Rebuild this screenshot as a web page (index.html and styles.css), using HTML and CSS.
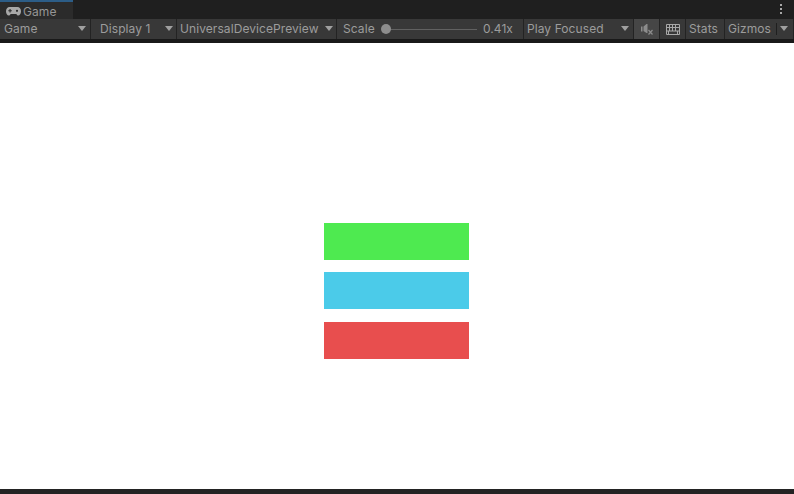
FILE: index.html
```html
<!DOCTYPE html>
<html lang="en">
<head>
  <meta charset="UTF-8" />
  <title>Game</title>
  <link rel="stylesheet" href="styles.css">
</head>
<body>
  <div class="window">
    <!-- Tab strip -->
    <div class="tab-row">
      <div class="tab">
        <svg class="tab-icon" width="15" height="9" viewBox="0 0 15 9">
          <path fill="#a8a8a8" fill-rule="evenodd" d="M3.500 0h8C13.500 0 15 1.800 15 4.300S13.700 8.500 12.300 8.500c-1 0-1.500-.7-2-1.500H4.700c-.5.800-1 1.500-2 1.500C1.300 8.500 0 6.800 0 4.300S1.500 0 3.500 0zM3.500 2v1.200H2.300v1.100h1.200v1.200h1.100V4.300h1.200V3.200H4.600V2zm7.500.7a1.100 1.100 0 1 0 0 2.200 1.100 1.100 0 0 0 0-2.200z"/>
        </svg>
        <span>Game</span>
      </div>
      <div class="tab-menu"><i></i><i></i><i></i></div>
    </div>

    <!-- Toolbar -->
    <div class="toolbar">
      <div class="tool drop w-game"><span>Game</span><b class="caret"></b></div>
      <div class="tool drop w-display"><span>Display 1</span><b class="caret"></b></div>
      <div class="tool drop w-device"><span>UniversalDevicePreview</span><b class="caret"></b></div>
      <div class="tool w-scale">
        <span>Scale</span>
        <div class="slider"><div class="thumb"></div></div>
        <span>0.41x</span>
      </div>
      <div class="tool drop w-play"><span>Play Focused</span><b class="caret"></b></div>
      <div class="tool icon-btn on">
        <svg width="12" height="11" viewBox="0 0 12 11">
          <path fill="#8c8c8c" d="M0 2.500h1.500v5H0zM2.500 2.500 5.500 0h1v9h-1L2.500 7z"/>
          <path stroke="#8c8c8c" stroke-width="1.200" fill="none" d="M7.500 6l4 4.500M11.500 6l-4 4.500"/>
        </svg>
      </div>
      <div class="tool icon-btn">
        <svg width="14" height="11" viewBox="0 0 14 11">
          <path stroke="#a8a8a8" fill="none" d="M.5.500h13v10H.5zM.5 3.500h13M.5 7h13M3.500.500v6.500M6.500.500v6.500M9.500.500v6.500M11.500 7v3.500M2.500 7v3.500"/>
        </svg>
      </div>
      <div class="tool w-stats"><span>Stats</span></div>
      <div class="tool w-gizmos"><span>Gizmos</span><em class="sep"></em><b class="caret"></b></div>
    </div>

    <div class="gap-strip"></div>

    <!-- Game view -->
    <div class="viewport">
      <div class="stack">
        <div class="bar green"></div>
        <div class="bar blue"></div>
        <div class="bar red"></div>
      </div>
    </div>

    <div class="bottom-strip"></div>
  </div>
</body>
</html>
```

FILE: styles.css
```css
* {
  box-sizing: border-box;
}

html, body {
  margin: 0;
  padding: 0;
  height: 100%;
  overflow: hidden;
  background: #1f1f1f;
}

.window {
  width: 794px;
  height: 494px;
  display: flex;
  flex-direction: column;
  font-family: Inter, "Liberation Sans", sans-serif;
  font-size: 12px;
  letter-spacing: 0.08px;
  color: #9c9c9c;
}

/* Tab strip */
.tab-row {
  height: 19px;
  display: flex;
  justify-content: space-between;
  background: #1f1f1f;
}

.tab {
  width: 73px;
  display: flex;
  align-items: center;
  gap: 2px;
  padding: 1px 0 0 6px;
  background: #2b2b2b;
  border-top: 2px solid #2c5d87;
  color: #969696;
}

.tab-icon {
  flex: none;
}

.tab-menu {
  width: 4px;
  margin: 4px 11px 0 0;
  display: flex;
  flex-direction: column;
  gap: 2px;
}

.tab-menu i {
  width: 2px;
  height: 2px;
  margin-left: 1px;
  background: #a8a8a8;
}

/* Toolbar */
.toolbar {
  height: 20px;
  display: flex;
  gap: 1px;
  background: #232323;
}

.tool {
  height: 20px;
  display: flex;
  align-items: center;
  padding: 0 4px 1px;
  background: #383838;
  white-space: nowrap;
}

.drop {
  justify-content: space-between;
}

.caret {
  flex: none;
  width: 0;
  height: 0;
  border-left: 4px solid transparent;
  border-right: 4px solid transparent;
  border-top: 5px solid #a0a0a0;
}

.w-game { width: 90px; padding-right: 4px; }
.w-display { width: 85px; padding-left: 9px; padding-right: 3px; }
.w-device { width: 159px; padding-left: 3px; padding-right: 3px; }
.w-scale { width: 186px; padding-left: 6px; padding-right: 10px; }
.w-play { width: 109px; padding-left: 3px; padding-right: 4px; }
.w-stats { width: 38px; padding-left: 3px; }
.w-gizmos { width: 68px; padding-left: 3px; }

.icon-btn {
  width: 25px;
  justify-content: center;
  padding: 0;
}

.icon-btn.on {
  background: #464646;
}

.slider {
  position: relative;
  flex: 1;
  height: 1px;
  margin: 1px 6px 0 11px;
  background: #616161;
}

.thumb {
  position: absolute;
  left: -5px;
  top: -5px;
  width: 10px;
  height: 10px;
  border-radius: 50%;
  background: #8d8d8d;
}

.sep {
  width: 1px;
  height: 12px;
  margin: 0 3px 0 5px;
  background: #1f1f1f;
}

.gap-strip {
  height: 4px;
  background: #191919;
}

/* Game view: the stack sits below the middle of the view */
.viewport {
  flex: 1;
  display: flex;
  justify-content: center;
  align-items: center;
  padding: 50px 2px 0 0;
  background: #fff;
}

.stack {
  width: 145px;
  display: flex;
  flex-direction: column;
  gap: 12px;
}

.bar {
  height: 37px;
}

.green { background: #4eea50; }
.blue { background: #4bcbe9; }
.red { background: #e84e4e; margin-top: 1px; }

.bottom-strip {
  height: 5px;
  background: #232323;
}
```
